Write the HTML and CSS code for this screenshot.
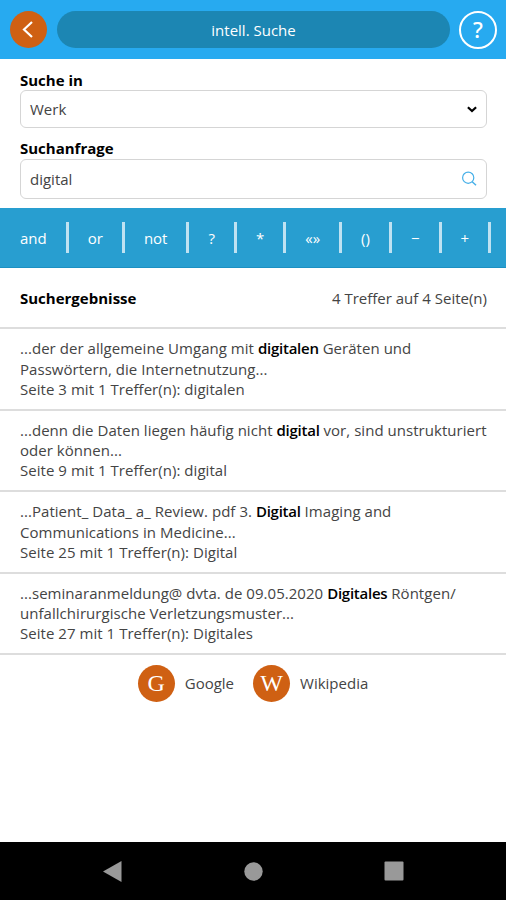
FILE: index.html
```html
<!DOCTYPE html>
<html lang="de">
<head>
    <meta charset="UTF-8">
    <meta name="viewport" content="width=device-width, initial-scale=1.0">
    <title>intell. Suche</title>
    <link rel="stylesheet" href="styles.css">
</head>
<body>
    <header class="topbar">
        <a class="round-btn back">
            <svg width="37" height="37" viewBox="0 0 37 37"><path d="M22 11 L14 18.5 L22 26" fill="none" stroke="#fff" stroke-width="2.2"/></svg>
        </a>
        <h1 class="title">intell. Suche</h1>
        <a class="help">?</a>
    </header>

    <form class="search-form">
        <label class="label">Suche in</label>
        <div class="field field-select">
            <span>Werk</span>
            <svg width="10" height="7" viewBox="0 0 10 7"><path d="M0.9 1.2 L5 5 L9.1 1.2" fill="none" stroke="#000" stroke-width="2.2"/></svg>
        </div>
        <label class="label label-query">Suchanfrage</label>
        <div class="field field-query">
            <span>digital</span>
            <svg width="16" height="16" viewBox="0 0 16 16" fill="none" stroke="#45afe8"><circle cx="7.2" cy="6.7" r="5.6" stroke-width="1.2"/><path d="M11.2 10.7 L15 14.3" stroke-width="1.4"/></svg>
        </div>
    </form>

    <nav class="operators">
        <a>and</a>
        <a>or</a>
        <a>not</a>
        <a>?</a>
        <a>*</a>
        <a>«»</a>
        <a>()</a>
        <a>−</a>
        <a>+</a>
    </nav>

    <div class="results-head">
        <strong>Suchergebnisse</strong>
        <span>4 Treffer auf 4 Seite(n)</span>
    </div>

    <ul class="results">
        <li>
            ...der der allgemeine Umgang mit <b>digitalen</b> Geräten und<br>
            Passwörtern, die Internetnutzung...<br>
            Seite 3 mit 1 Treffer(n): digitalen
        </li>
        <li>
            ...denn die Daten liegen häufig nicht <b>digital</b> vor, sind unstrukturiert<br>
            oder können...<br>
            Seite 9 mit 1 Treffer(n): digital
        </li>
        <li>
            ...Patient_ Data_ a_ Review. pdf 3. <b>Digital</b> Imaging and<br>
            Communications in Medicine...<br>
            Seite 25 mit 1 Treffer(n): Digital
        </li>
        <li>
            ...seminaranmeldung@ dvta. de 09.05.2020 <b>Digitales</b> Röntgen/<br>
            unfallchirurgische Verletzungsmuster...<br>
            Seite 27 mit 1 Treffer(n): Digitales
        </li>
    </ul>

    <div class="external">
        <a><span class="round-btn letter">G</span>Google</a>
        <a><span class="round-btn letter">W</span>Wikipedia</a>
    </div>

    <footer class="android-nav">
        <svg width="19" height="21" viewBox="0 0 19 21"><path d="M0 10.5 L18.5 0 V21 Z" fill="#999"/></svg>
        <svg width="19" height="19" viewBox="0 0 19 19"><circle cx="9.5" cy="9.5" r="9.2" fill="#999"/></svg>
        <svg width="20" height="20" viewBox="0 0 20 20"><rect x="0.5" y="0.5" width="19" height="19" rx="1" fill="#999"/></svg>
    </footer>
</body>
</html>
```

FILE: styles.css
```css
:root {
    --header-color: #27aaf0;
    --title-color: #1c86b3;
    --toolbar-color: #289ed0;
    --accent-color: #cf6013;
    --border-color: #d5d5d5;
    --text-color: #444;
}

* {
    box-sizing: border-box;
}

body {
    margin: 0;
    height: 900px;
    display: flex;
    flex-direction: column;
    overflow: hidden;
    background: #fff;
    color: var(--text-color);
    font-family: "Open Sans", sans-serif;
    font-size: 15px;
    line-height: 20.3px;
}

svg {
    display: block;
}

.topbar {
    height: 59px;
    flex: none;
    display: flex;
    align-items: center;
    padding: 0 9px 0 10px;
    background: var(--header-color);
}

.round-btn {
    width: 37px;
    height: 37px;
    flex: none;
    border-radius: 50%;
    background: var(--accent-color);
    color: #fff;
}

.title {
    flex: 1;
    height: 37px;
    margin: 0 9px 0 10px;
    border-radius: 19px;
    background: var(--title-color);
    color: #fff;
    font-size: 15px;
    font-weight: 400;
    line-height: 38px;
    text-align: center;
}

.help {
    width: 38px;
    height: 38px;
    border: 2px solid #fff;
    border-radius: 50%;
    color: #fff;
    font-family: "Noto Sans", sans-serif;
    font-size: 22px;
    font-weight: 500;
    line-height: 33px;
    text-align: center;
}

.search-form {
    height: 149px;
    flex: none;
    padding: 11px 19px 0 20px;
}

.label {
    display: block;
    height: 20px;
    color: #000;
    font-weight: 700;
}

.label-query {
    margin-top: 10px;
}

.field {
    display: flex;
    align-items: center;
    justify-content: space-between;
    padding: 0 9px;
    border: 1px solid var(--border-color);
    border-radius: 6px;
}

.field-select {
    height: 38px;
}

.field-query {
    height: 40px;
    margin-top: 1px;
}

.operators {
    height: 60px;
    flex: none;
    display: flex;
    align-items: center;
    padding-left: 1px;
    background: var(--toolbar-color);
    border-bottom: 1px solid #1c90c2;
    color: #fff;
}

.operators a {
    height: 31px;
    padding: 0 19px;
    border-right: 3px solid #bfe2f2;
    line-height: 33px;
}

.results-head {
    height: 61px;
    flex: none;
    display: flex;
    align-items: center;
    justify-content: space-between;
    padding: 2px 19px 0 20px;
    border-bottom: 2px solid #ddd;
}

.results-head strong {
    color: #000;
}

.results {
    margin: 0;
    padding: 0;
    list-style: none;
}

.results li {
    height: 81.5px;
    padding: 9.4px 0 0 20px;
    border-bottom: 2px solid #ddd;
    letter-spacing: 0.04px;
    white-space: nowrap;
}

.results b {
    color: #000;
    font-weight: 600;
    letter-spacing: -0.25px;
}

.external {
    display: flex;
    justify-content: center;
    gap: 19px;
    padding-top: 10px;
}

.external a {
    display: flex;
    align-items: center;
    gap: 10px;
}

.letter {
    font-family: "Liberation Serif", serif;
    font-size: 24px;
    line-height: 37px;
    text-align: center;
}

.android-nav {
    height: 58px;
    flex: none;
    margin-top: auto;
    padding: 0 102px 0 103px;
    display: flex;
    align-items: center;
    justify-content: space-between;
    background: #000;
}
```
